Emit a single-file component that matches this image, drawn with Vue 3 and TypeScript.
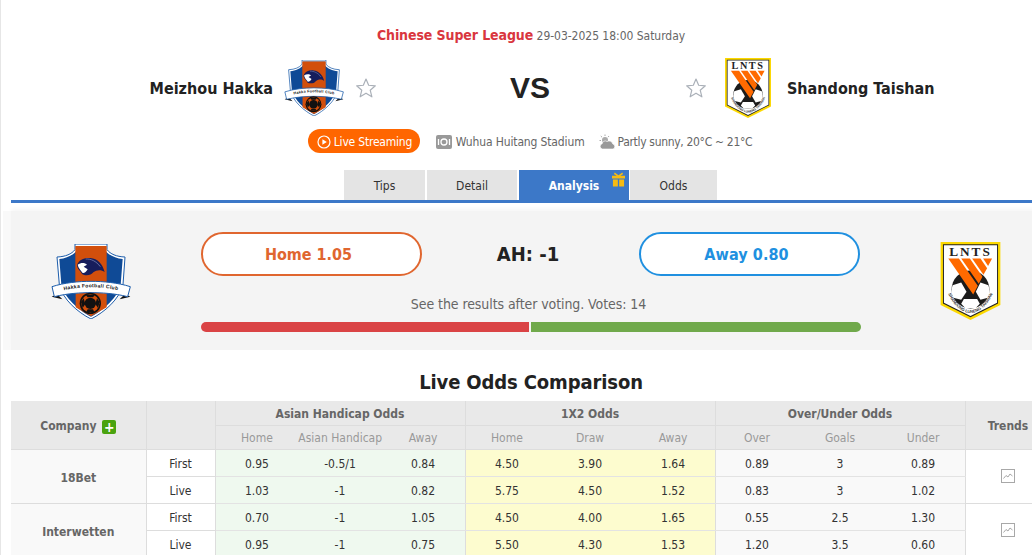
<script setup lang="ts">
interface Row { label: string; ah: string[]; x12: string[]; ou: string[] }
interface Company { name: string; rows: Row[] }

const companies: Company[] = [
  {
    name: '18Bet',
    rows: [
      { label: 'First', ah: ['0.95', '-0.5/1', '0.84'], x12: ['4.50', '3.90', '1.64'], ou: ['0.89', '3', '0.89'] },
      { label: 'Live', ah: ['1.03', '-1', '0.82'], x12: ['5.75', '4.50', '1.52'], ou: ['0.83', '3', '1.02'] },
    ],
  },
  {
    name: 'Interwetten',
    rows: [
      { label: 'First', ah: ['0.70', '-1', '1.05'], x12: ['4.50', '4.00', '1.65'], ou: ['0.55', '2.5', '1.30'] },
      { label: 'Live', ah: ['0.95', '-1', '0.75'], x12: ['5.50', '4.30', '1.53'], ou: ['1.20', '3.5', '0.60'] },
    ],
  },
]
const tabs = ['Tips', 'Detail', 'Analysis', 'Odds']
const subHeads = ['Home', 'Asian Handicap', 'Away', 'Home', 'Draw', 'Away', 'Over', 'Goals', 'Under']
const homeShare = 49.7
</script>

<template>
  <div class="page">
    <svg class="defs" width="0" height="0" aria-hidden="true">
      <symbol id="hakka" viewBox="0 0 240 225">
        <path d="M72 0H168V17C178 30 196 38 222 39L216 122C206 165 160 205 120 225C80 205 34 165 25 122L18 39C44 38 62 30 72 17Z" fill="#fff" stroke="#1b5cab" stroke-width="3" />
        <path d="M76 6H164V21C174 34 194 43 215 45L209 122C200 160 158 198 120 218C82 198 40 160 31 122L25 45C46 43 66 34 76 21Z" fill="#0f4a96" />
        <path d="M73 6H167V118H73Z" fill="#d24f0c" />
        <path d="M74 145H167V190L120 217L74 190Z" fill="#d24f0c" />
        <path d="M78 62C85 46 100 40 118 42C140 44 155 60 161 84C150 76 136 78 127 85C120 95 102 96 93 90C90 80 78 76 78 62Z" fill="#161d5c" />
        <path d="M80 62C90 55 102 56 108 62L98 68L110 76C106 84 100 88 95 87C90 79 82 73 80 62Z" fill="#fff" />
        <path d="M104 45C120 44 136 52 148 68" fill="none" stroke="#8a93c0" stroke-width="2" />
        <path d="M18 150L2 158L34 166Z M222 150L238 158L206 166Z" fill="#111" />
        <path id="hakka-arc" d="M14 146C60 132 90 130 120 130C150 130 180 132 226 146" fill="none" />
        <path d="M3 128C40 116 82 112 120 112C158 112 200 116 238 128L230 158C190 148 150 146 120 146C90 146 50 148 10 158Z" fill="#fff" stroke="#1b5cab" stroke-width="3" />
        <text class="hakka-txt"><textPath href="#hakka-arc" startOffset="50%" text-anchor="middle">Hakka Football Club</textPath></text>
        <circle cx="118" cy="178" r="32" fill="#111" />
        <circle cx="118" cy="178" r="27" fill="#d24f0c" />
        <circle cx="118" cy="178" r="17" fill="#111" />
        <path d="M104 152L132 152L126 160H110Z M90 174L98 163L103 180L95 192Z M146 174L138 163L133 180L141 192Z M106 204L130 204L126 196H110Z" fill="#111" />
      </symbol>
      <symbol id="lnts" viewBox="0 0 180 235">
        <path d="M0 0H180V190L90 235L0 190Z" fill="#fcd800" />
        <path d="M7 7H173V185L90 227L7 185Z" fill="#222" />
        <path d="M10 10H170V183L90 223L10 183Z" fill="#fff" />
        <text class="lnts-txt" x="90" y="43" text-anchor="middle">LNTS</text>
        <circle cx="90" cy="143" r="57" fill="#1c1c1c" />
        <path d="M36 130L62 122L78 150L62 174L38 168C32 156 32 142 36 130Z" fill="#fff" />
        <path d="M144 130L120 122L106 150L120 174L142 168C148 156 148 142 144 130Z" fill="#fff" />
        <path d="M70 172H110L118 186L106 199H74L62 186Z" fill="#fff" />
        <path d="M23 50H55L112 132L98 158Z" fill="#ff6a00" />
        <path d="M62 50H88L126 105L115 126Z" fill="#ff6a00" />
        <path d="M95 50H120L140 79L129 99Z" fill="#ff6a00" />
        <path d="M128 50H155L143 72Z" fill="#ff6a00" />
        <path id="arc-l" d="M17 125C18 170 56 214 90 214C124 214 162 170 163 125" fill="none" />
        <text class="lnts-arc"><textPath href="#arc-l" startOffset="50%" text-anchor="middle">SHANDONG LUNENG TAISHAN</textPath></text>
      </symbol>
      <symbol id="star" viewBox="0 0 24 24">
        <path d="M12 2.2L14.9 9L22.2 9.6L16.6 14.4L18.4 21.6L12 17.7L5.6 21.6L7.4 14.4L1.8 9.6L9.1 9Z" fill="#fff" stroke="#aab0b8" stroke-width="1.3" stroke-linejoin="round" />
      </symbol>
      <symbol id="trend" viewBox="0 0 14 14">
        <rect x=".5" y=".5" width="13" height="13" fill="#fff" stroke="#a8a8a8" />
        <path d="M2.5 9.5L5 6.5L7 8L9 5L11.5 7" fill="none" stroke="#a8a8a8" />
      </symbol>
    </svg>

    <main class="wrap">
      <header class="head">
        <p class="meta"><strong class="league">Chinese Super League</strong> 29-03-2025 18:00 Saturday</p>
        <div class="teams">
          <div class="team team-home">
            <span class="team-name">Meizhou Hakka</span>
            <svg class="logo-hakka-s"><use href="#hakka" /></svg>
            <svg class="star"><use href="#star" /></svg>
          </div>
          <div class="vs">VS</div>
          <div class="team team-away">
            <svg class="star"><use href="#star" /></svg>
            <svg class="logo-lnts-s"><use href="#lnts" /></svg>
            <span class="team-name">Shandong Taishan</span>
          </div>
        </div>
        <div class="info">
          <span class="live">
            <svg class="live-ico" viewBox="0 0 14 14"><circle cx="7" cy="7" r="6" fill="none" stroke="#fff" stroke-width="1.2" /><path d="M5.4 4.2L9.8 7L5.4 9.8Z" fill="#fff" /></svg>
            Live Streaming
          </span>
          <span class="info-item stadium">
            <svg class="ico16" viewBox="0 0 16 16"><rect width="16" height="14" y="1" rx="2" fill="#999" /><circle cx="8" cy="8" r="3" fill="none" stroke="#fff" stroke-width="1.3" /><path d="M2.5 5V11M13.5 5V11" stroke="#fff" stroke-width="1.3" /></svg>
            Wuhua Huitang Stadium
          </span>
          <span class="info-item weather">
            <svg class="ico17" viewBox="0 0 17 16"><circle cx="6" cy="6" r="3" fill="#aaa" /><path d="M6 .5V2M1.8 2L3 3.2M.5 6.5H2M10 2L9 3.2" stroke="#aaa" /><path d="M3.5 15A2.7 2.7 0 0 1 3.2 9.7A3 3 0 0 1 8 7.6A3.8 3.8 0 0 1 13.8 10A2.6 2.6 0 0 1 14 15Z" fill="#999" stroke="#fff" stroke-width=".6" /></svg>
            Partly sunny, 20°C ~ 21°C
          </span>
        </div>
        <nav class="tabs">
          <span v-for="t in tabs" :key="t" class="tab" :class="[`tab-${t.toLowerCase()}`, { active: t === 'Analysis' }]">
            {{ t }}
            <svg v-if="t === 'Analysis'" class="gift" viewBox="0 0 14 15">
              <path d="M3 0L7 3L11 0L12 1.5L9 3.5H14V6.5H0V3.5H5L2 1.5Z" fill="#f6bb13" />
              <path d="M1 7.5H6.3V15H1ZM7.7 7.5H13V15H7.7Z" fill="#f6bb13" />
            </svg>
          </span>
        </nav>
      </header>

      <section class="vote">
        <div class="vote-logo-l"><svg class="logo-hakka-l"><use href="#hakka" /></svg></div>
        <div class="vote-mid">
          <div class="choices">
            <button class="pick pick-home">Home 1.05</button>
            <b class="ah">AH: -1</b>
            <button class="pick pick-away">Away 0.80</button>
          </div>
          <p class="vote-note">See the results after voting. Votes: 14</p>
          <div class="bar">
            <span class="bar-home" :style="{ width: homeShare + '%' }"></span>
            <span class="bar-away"></span>
          </div>
        </div>
        <div class="vote-logo-r"><svg class="logo-lnts-l"><use href="#lnts" /></svg></div>
      </section>

      <h2 class="odds-title">Live Odds Comparison</h2>
      <table class="odds">
        <colgroup>
          <col class="c-co" /><col class="c-lb" />
          <col v-for="n in 9" :key="n" class="c-n" />
          <col class="c-tr" />
        </colgroup>
        <thead>
          <tr class="h1">
            <th rowspan="2" class="th-tall">Company <span class="plus">+</span></th>
            <th rowspan="2"></th>
            <th colspan="3">Asian Handicap Odds</th>
            <th colspan="3">1X2 Odds</th>
            <th colspan="3">Over/Under Odds</th>
            <th rowspan="2" class="th-tall">Trends</th>
          </tr>
          <tr class="h2">
            <th v-for="(s, i) in subHeads" :key="i" :class="{ 'grp-end': (i + 1) % 3 === 0 }">{{ s }}</th>
          </tr>
        </thead>
        <tbody>
          <template v-for="c in companies" :key="c.name">
            <tr v-for="(r, ri) in c.rows" :key="r.label">
              <td v-if="ri === 0" rowspan="2" class="td-co">{{ c.name }}</td>
              <td class="td-lb">{{ r.label }}</td>
              <td v-for="(v, i) in r.ah" :key="'a' + i" class="ah-c" :class="{ 'grp-end': i === 2 }">{{ v }}</td>
              <td v-for="(v, i) in r.x12" :key="'x' + i" class="x-c" :class="{ 'grp-end': i === 2 }">{{ v }}</td>
              <td v-for="(v, i) in r.ou" :key="'o' + i" class="ou-c" :class="{ 'grp-end': i === 2 }">{{ v }}</td>
              <td v-if="ri === 0" rowspan="2" class="td-tr"><svg class="trend"><use href="#trend" /></svg></td>
            </tr>
          </template>
        </tbody>
      </table>
    </main>
  </div>
</template>

<style>
html, body { margin: 0; overflow: hidden; background: #fff; }
.hakka-txt { font: 700 15px "Liberation Sans", sans-serif; fill: #111; letter-spacing: 1px; }
.lnts-txt { font: 700 40px "Liberation Serif", serif; fill: #222; letter-spacing: 6px; }
.lnts-arc { font: 700 12.5px "Liberation Sans", sans-serif; fill: #333; }
</style>

<style scoped>
.defs { position: absolute; }
.page {
  width: 1062px;
  height: 555px;
  overflow: hidden;
  box-sizing: border-box;
  border-left: 1px solid #e6e6e6;
  padding-left: 10px;
  font-family: "DejaVu Sans", sans-serif;
  font-stretch: condensed;
  font-size: 12px;
  color: #333;
}
.wrap { width: 1040px; }
.head { display: flex; flex-direction: column; align-items: center; padding-top: 25px; border-bottom: 3px solid #3c78c8; }
.meta { margin: 0; line-height: 20px; color: #666; letter-spacing: -0.03px; }
.league { color: #d9363e; font-size: 14px; font-weight: 700; letter-spacing: -0.1px; }
.teams { display: grid; grid-template-columns: 366px 308px 366px; height: 60px; margin-top: 12px; width: 100%; }
.team { display: flex; align-items: center; }
.team-home { justify-content: flex-end; }
.team-name { font-size: 16px; font-weight: 700; color: #222; }
.team-home .team-name { margin-right: 11px; }
.team-home .star { margin-left: 11px; }
.team-away .team-name { margin-left: 16px; }
.team-away .star { margin-right: 18px; }
.star { width: 22px; height: 22px; }
.logo-hakka-s { width: 60px; height: 56px; }
.logo-lnts-s { width: 46px; height: 60px; }
.vs { text-align: center; padding-right: 2px; font-size: 30px; font-weight: 700; color: #222; line-height: 60px; font-family: "Liberation Sans", sans-serif; }
.info { display: flex; align-items: center; margin: 11px 0 0 -2px; height: 24px; }
.live { display: flex; align-items: center; gap: 3px; box-sizing: border-box; width: 112px; height: 24px; padding: 1px 0 0 9px; border-radius: 12px; background: #ff6600; color: #fff; letter-spacing: -0.2px; }
.live-ico { width: 14px; height: 14px; }
.info-item { display: flex; align-items: center; padding-top: 2px; color: #666; }
.stadium { margin-left: 16px; gap: 4px; letter-spacing: -0.14px; }
.weather { margin-left: 14px; gap: 2px; letter-spacing: -0.32px; }
.ico16 { width: 16px; height: 16px; }
.ico17 { width: 17px; height: 16px; }
.tabs { display: flex; gap: 2px; margin-top: 17px; height: 30px; margin-left: -1px; }
.tab { position: relative; display: flex; align-items: center; justify-content: center; box-sizing: border-box; padding-top: 2px; background: #e4e4e4; color: #333; }
.tab-tips { width: 81px; }
.tab-detail { width: 90px; }
.tab-analysis { width: 110px; margin-right: -1px; }
.tab-odds { width: 87px; }
.active { background: #3c78c8; color: #fff; font-weight: 700; }
.gift { position: absolute; top: 2px; right: 4px; width: 13px; height: 15px; }

.vote {
  display: grid;
  grid-template-columns: 190px 660px 190px;
  margin-top: 8px;
  height: 139px;
  background: #f4f4f4;
  box-shadow: 0 -3px 4px #f8f8f8, -8px 0 0 #f9f9f9;
}
.vote-logo-l { padding: 33px 0 0 40px; }
.vote-logo-r { padding: 31px 0 0 79px; }
.logo-hakka-l { width: 80px; height: 75px; display: block; }
.logo-lnts-l { width: 61px; height: 78px; display: block; }
.vote-mid { padding-top: 21px; display: flex; flex-direction: column; }
.choices { display: flex; align-items: center; justify-content: space-between; }
.pick { box-sizing: border-box; width: 221px; height: 44px; border-radius: 22px; background: #fff; border: 2px solid; font-family: inherit; font-stretch: condensed; font-size: 16px; font-weight: 700; padding: 0 6px 0 0; }
.pick-home { color: #e0662f; border-color: #e0662f; }
.pick-away { color: #2090e0; border-color: #2090e0; letter-spacing: 0.1px; margin-left: -1px; margin-right: 1px; }
.ah { font-size: 20px; color: #222; margin-left: -6px; }
.vote-note { margin: 18px 0 0; padding-right: 5px; line-height: 20px; text-align: center; color: #666; font-size: 14px; letter-spacing: -0.08px; }
.bar { display: flex; gap: 2px; height: 10px; margin-top: 8px; border-radius: 5px; overflow: hidden; }
.bar-home { background: #da4345; flex: none; }
.bar-away { background: #70a94b; flex: 1; }

.odds-title { margin: 20px 0 7px; line-height: 24px; text-align: center; font-size: 20px; font-weight: 700; color: #222; letter-spacing: -0.12px; }
.odds { border-collapse: collapse; table-layout: fixed; width: 1040px; }
.c-co { width: 135px; }
.c-lb { width: 69px; }
.c-n { width: 83.33px; }
.c-tr { width: 86px; }
.odds th, .odds td { padding: 0; text-align: center; font-weight: 400; white-space: nowrap; border: 1px solid #ddd; border-left: 0; border-top: 0; }
.odds th { box-sizing: border-box; padding-top: 2px; background: #e9e9e9; color: #666; font-weight: 700; }
.odds th.th-tall { padding-top: 3px; }
.h1 { height: 24px; }
.h2 { height: 24px; }
.odds .h2 th { font-weight: 400; color: #999; border-right: 0; }
.odds .h2 th.grp-end { border-right: 1px solid #ddd; }
.odds td { box-sizing: border-box; height: 27px; padding-top: 2px; }
.odds td.ah-c, .odds td.x-c, .odds td.ou-c { border-right: 0; border-bottom-color: #e3e3e3; color: #333; }
.odds td.grp-end { border-right: 1px solid #ddd; }
.odds td.td-co { padding-top: 4px; background: #f9f9f9; color: #666; font-weight: 700; }
.td-lb { background: #fff; }
.ah-c { background: #eff9ef; }
.x-c { background: #fdfccf; }
.ou-c { background: #f9f9f9; }
.odds td.td-tr { background: #fff; padding-top: 0; }
.plus { display: inline-flex; align-items: center; justify-content: center; width: 14px; height: 14px; margin-left: 2px; border-radius: 2px; background: #4aa30f; color: #fff; font-size: 14px; line-height: 14px; vertical-align: -2px; }
.trend { width: 14px; height: 14px; vertical-align: middle; }
</style>
